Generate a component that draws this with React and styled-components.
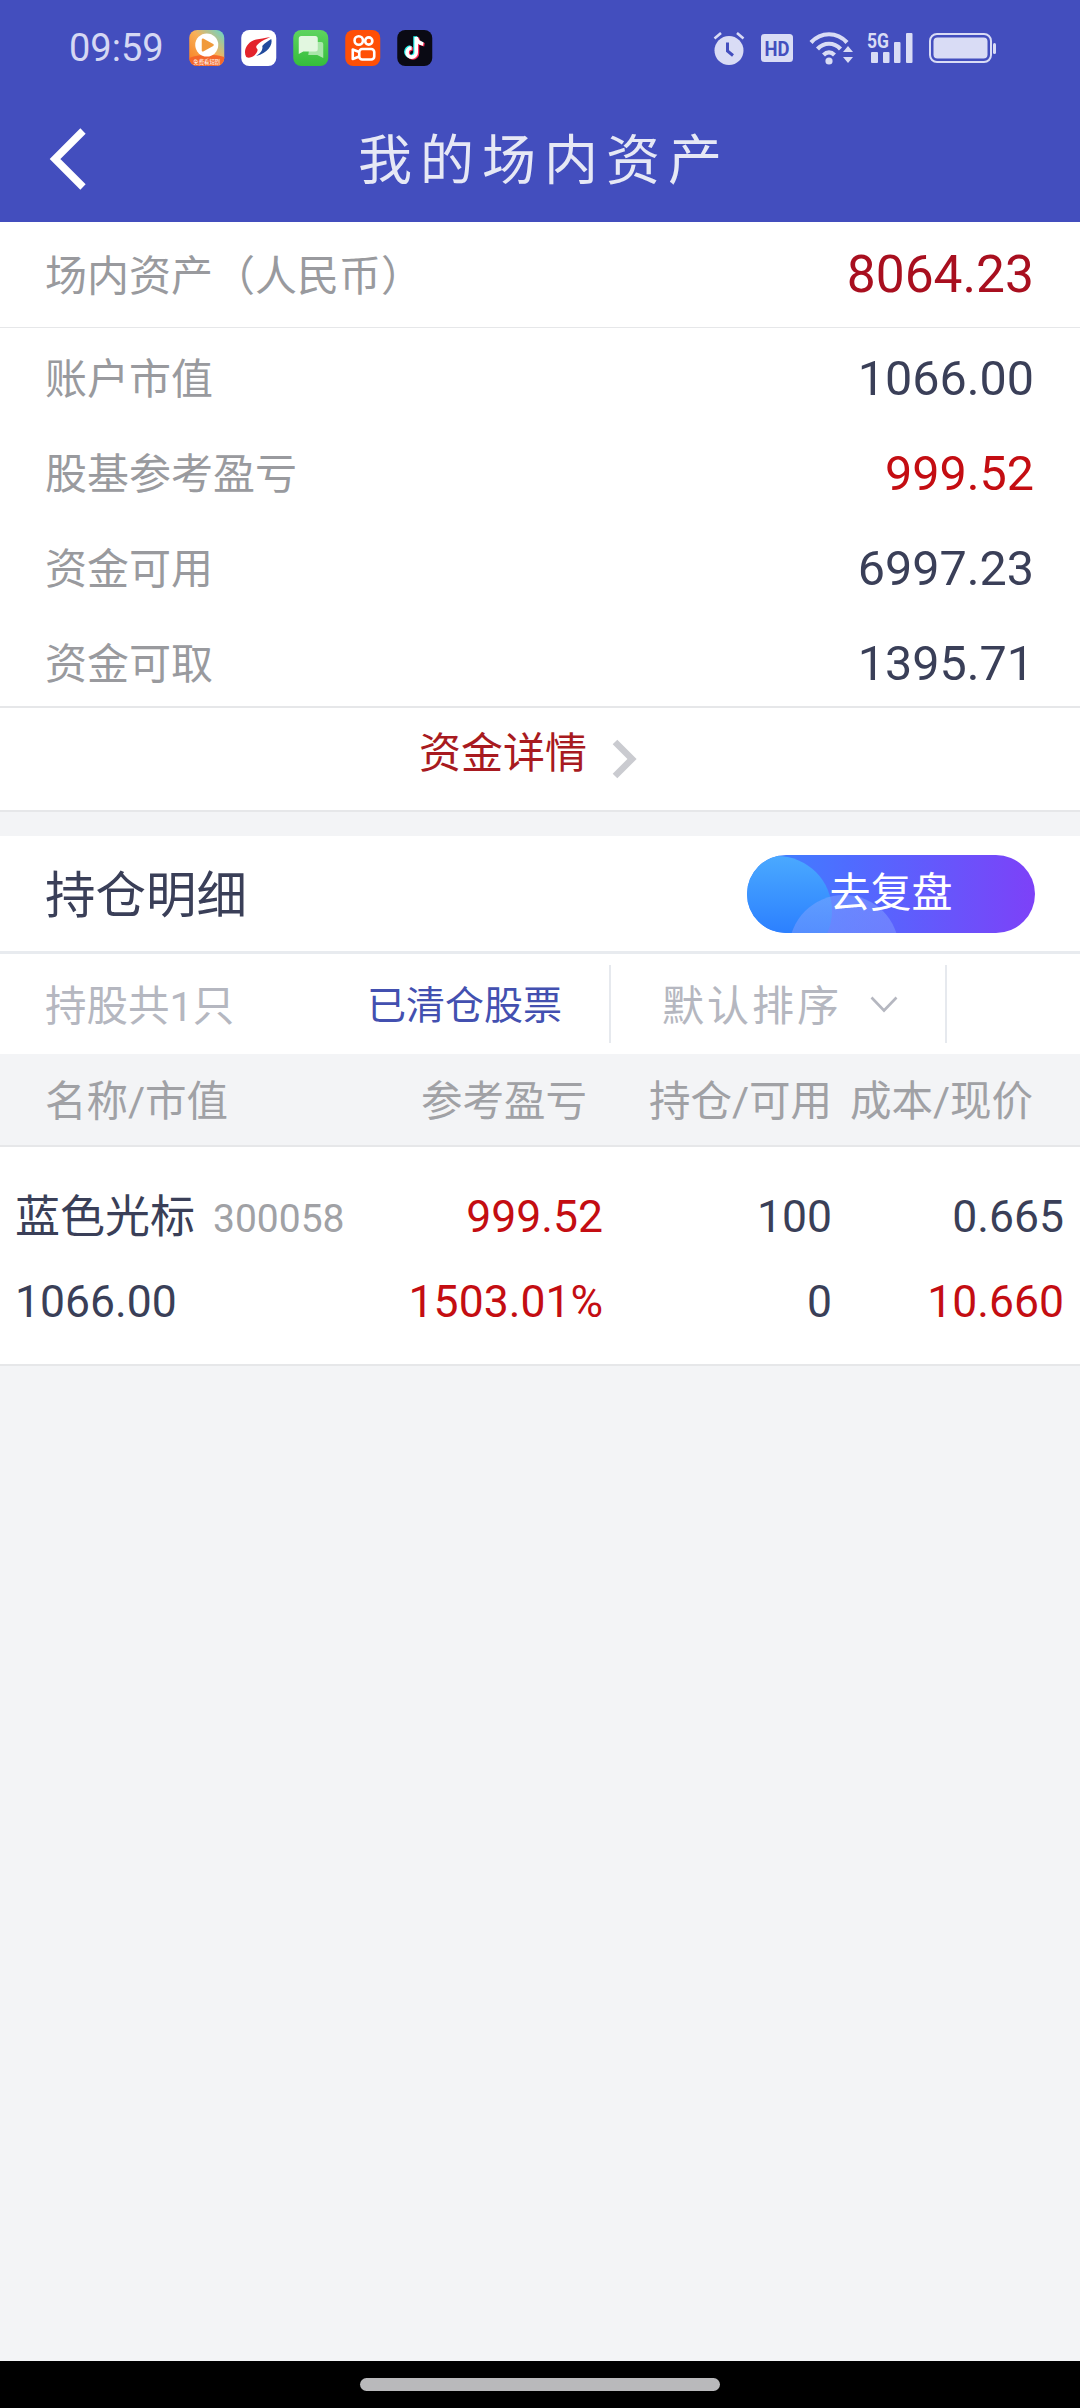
import React from "react";
import styled, { createGlobalStyle } from "styled-components";

const Global = createGlobalStyle`
  html, body { margin: 0; padding: 0; background: #f3f4f6; }
  * { box-sizing: border-box; }
`;

const Page = styled.div`
  width: 1080px;
  height: 2408px;
  display: flex;
  flex-direction: column;
  background: #f3f4f6;
  font-family: Roboto, "Noto Sans CJK SC", sans-serif;
  overflow: hidden;
`;
const Header = styled.header`
  height: 222px;
  background: #434ebe;
  flex: none;
  display: flex;
  flex-direction: column;
`;
const StatusBar = styled.div`
  height: 96px;
  padding: 0 84px 0 69px;
  display: flex;
  align-items: center;
  color: #d5d8f3;
`;
const Time = styled.span`
  flex: none;
  font-size: 38px;
  line-height: 1;
  width: 120px;
`;
const AppIcons = styled.div`
  display: flex;
  gap: 16.5px;
`;
const AppIcon = styled.svg`
  width: 35.5px;
  height: 36px;
  display: block;
`;
const SystemIcons = styled.div`
  margin-left: auto;
  display: flex;
  align-items: center;
`;
const Sys = styled.svg`
  display: block;
  flex: none;
  margin-left: ${(p) => p.$gap || 0}px;
`;
const NavBar = styled.div`
  position: relative;
  flex: 1;
  display: flex;
  align-items: center;
  justify-content: center;
  padding-top: 6px;
`;
const Back = styled.svg`
  position: absolute;
  left: 46px;
  top: 30px;
`;
const Title = styled.h1`
  margin: 0;
  font-size: 54px;
  font-weight: 400;
  line-height: 1;
  letter-spacing: 8px;
  color: #e6e8f5;
  padding-left: 8px;
`;

const Section = styled.section`
  background: #fff;
  flex: none;
`;
const TotalRow = styled.div`
  height: 106px;
  padding: 0 46px 0 45px;
  display: flex;
  align-items: center;
  justify-content: space-between;
  border-bottom: 1px solid #e6e7e9;
`;
const Rows = styled.div`
  padding-top: 4px;
  border-bottom: 2px solid #e6e7e9;
`;
const Row = styled.div`
  height: 95px;
  padding: 0 46px 0 45px;
  display: flex;
  align-items: center;
  justify-content: space-between;
  &:last-child {
    height: 89px;
    padding-top: 6px;
  }
`;
const Label = styled.span`
  font-size: 42px;
  line-height: 1;
  color: #999a9e;
`;
const TotalLabel = styled(Label)`
  padding-top: 4px;
`;
const Value = styled.span`
  font-size: ${(p) => p.$size || 48.5}px;
  line-height: 1;
  color: ${(p) => p.$color || "#3a3f58"};
`;
const DetailRow = styled.div`
  height: 104px;
  display: flex;
  align-items: center;
  justify-content: center;
  gap: 24px;
  border-bottom: 2px solid #e6e7e9;
  padding-right: 24px;
`;
const DetailText = styled.span`
  font-size: 42px;
  line-height: 1;
  color: #a81a20;
  padding-bottom: 10px;
`;
const Spacer = styled.div`
  height: 24px;
  flex: none;
`;
const HoldHead = styled.div`
  height: 118px;
  padding: 0 45px 0 45px;
  display: flex;
  align-items: center;
  justify-content: space-between;
  border-bottom: 3px solid #e8ebef;
`;
const HoldTitle = styled.h2`
  margin: 0;
  padding-top: 5px;
  font-size: 50.5px;
  font-weight: 400;
  line-height: 1;
  color: #3a3f58;
`;
const ReviewButton = styled.div`
  position: relative;
  width: 288px;
  height: 78px;
  border-radius: 39px;
  overflow: hidden;
  display: flex;
  align-items: center;
  justify-content: center;
  background: linear-gradient(90deg, #3a86ff 0%, #4f6cff 35%, #7d41f8 100%);
  color: #fff;
  font-size: 41px;
  line-height: 1;
  &::before {
    content: "";
    position: absolute;
    left: -25px;
    top: 1px;
    width: 110px;
    height: 110px;
    border-radius: 50%;
    background: linear-gradient(180deg, #4aa9ff 0%, #2c80ff 70%);
  }
  &::after {
    content: "";
    position: absolute;
    left: 42px;
    top: 40px;
    width: 110px;
    height: 110px;
    border-radius: 50%;
    background: linear-gradient(180deg, rgba(140, 170, 255, 0.45), rgba(120, 140, 255, 0.5));
  }
`;
const ReviewLabel = styled.span`
  position: relative;
  z-index: 1;
`;
const FilterBar = styled.div`
  height: 100px;
  display: flex;
  align-items: center;
  padding-left: 45px;
`;
const Count = styled.span`
  font-size: 41.5px;
  line-height: 1;
  color: #b5b7c0;
  width: 322px;
  padding-top: 5px;
`;
const Cleared = styled.span`
  font-size: 39px;
  line-height: 1;
  color: #4350b0;
  width: 242px;
  padding-top: 5px;
`;
const SortCell = styled.div`
  width: 338px;
  height: 78px;
  padding-left: 51px;
  display: flex;
  align-items: center;
  gap: 28px;
  border-left: 2px solid #e6e9ee;
  border-right: 2px solid #e6e9ee;
`;
const SortText = styled.span`
  font-size: 42px;
  line-height: 1;
  letter-spacing: 3px;
  color: #b5b7c0;
  padding-top: 5px;
`;
const TableHead = styled.div`
  height: 93px;
  padding: 5px 47px 0 45px;
  display: grid;
  grid-template-columns: minmax(0, 1fr) 200px 245px 201px;
  align-items: center;
  border-bottom: 2px solid #e6e7e9;
  flex: none;
`;
const HeadCell = styled.span`
  font-size: 41.5px;
  line-height: 1;
  color: #a0a1a5;
  text-align: ${(p) => (p.$left ? "left" : "right")};
  white-space: nowrap;
`;
const StockRow = styled.div`
  height: 219px;
  padding: 28px 16px 0 15px;
  background: #fff;
  border-bottom: 2px solid #e6e7e9;
  display: grid;
  grid-template-columns: minmax(0, 1fr) 260px 229px 232px;
  grid-auto-rows: 85px;
  align-items: center;
  flex: none;
`;
const NameCell = styled.div`
  display: flex;
  align-items: center;
  gap: 18px;
  white-space: nowrap;
`;
const StockName = styled.span`
  font-size: 45px;
  line-height: 1;
  color: #3a3f58;
`;
const StockCode = styled.span`
  font-size: 39px;
  line-height: 1;
  color: #a0a1a5;
  padding-top: 3px;
`;
const Cell = styled.span`
  font-size: 44.5px;
  line-height: 1;
  color: ${(p) => (p.$red ? "#c40d12" : "#3a3f58")};
  text-align: ${(p) => (p.$left ? "left" : "right")};
`;
const Fill = styled.div`
  flex: 1;
`;
const GestureBar = styled.div`
  height: 47px;
  background: #000;
  flex: none;
  display: flex;
  align-items: center;
  justify-content: center;
`;
const Pill = styled.div`
  width: 360px;
  height: 13px;
  border-radius: 7px;
  background: #b9b9bb;
`;

const PlayApp = () => (
  <AppIcon viewBox="0 0 35 36">
    <defs>
      <linearGradient id="pa" x1="0" y1="1" x2="1" y2="0">
        <stop offset="0" stopColor="#f97a1c" />
        <stop offset="0.55" stopColor="#f7b25a" />
        <stop offset="1" stopColor="#5fd6cf" />
      </linearGradient>
    </defs>
    <rect width="35" height="36" rx="8" fill="url(#pa)" />
    <path d="M0 28 C10 24 25 24 35 27 V28 A8 8 0 0 1 27 36 H8 A8 8 0 0 1 0 28Z" fill="#f4672a" />
    <circle cx="17.5" cy="15" r="11.5" fill="#fff" />
    <path d="M13.5 9.5 L23.5 15 L13.5 20.5Z" fill="#f09a3c" stroke="#f09a3c" strokeWidth="2" strokeLinejoin="round" />
    <text x="17.5" y="33.5" fontSize="5.4" fill="#fff" textAnchor="middle" fontFamily="'Noto Sans CJK SC', sans-serif">免费看短剧</text>
  </AppIcon>
);
const BankApp = () => (
  <AppIcon viewBox="0 0 35 36">
    <rect width="35" height="36" rx="8" fill="#fff" />
    <path d="M5 27 C1 20 7 11 15 9.5 C19 9 23 8 29 7 C25 9 21 10.5 18 13 C15 15.5 14 17 16 19 C18 21.5 11 30 5 27Z" fill="#e3232c" />
    <path d="M30 9 C32 15 26 23 15 26 C19.5 23 22 19.5 21 16 C23 13 27 11 30 9Z" fill="#214a9c" />
  </AppIcon>
);
const ChatApp = () => (
  <AppIcon viewBox="0 0 35 36">
    <defs>
      <linearGradient id="ch" x1="0" y1="0" x2="0" y2="1">
        <stop offset="0" stopColor="#5ed45f" />
        <stop offset="1" stopColor="#35bd3c" />
      </linearGradient>
    </defs>
    <rect width="35" height="36" rx="8" fill="url(#ch)" />
    <path d="M17 12 H28 A2 2 0 0 1 30 14 V28 L24 25 H15 Z" fill="#a9e6aa" />
    <path d="M8 6 H22 A2.5 2.5 0 0 1 24.5 8.5 V19 A2.5 2.5 0 0 1 22 21.5 H10 L5.5 24 V8.5 A2.5 2.5 0 0 1 8 6Z" fill="#e2f7e0" />
  </AppIcon>
);
const KuaishouApp = () => (
  <AppIcon viewBox="0 0 35 36">
    <rect width="35" height="36" rx="8" fill="#ff4f06" />
    <g fill="none" stroke="#fff" strokeWidth="2.6">
      <circle cx="13.5" cy="10.5" r="4.2" />
      <circle cx="23.5" cy="11" r="3.6" />
      <rect x="14" y="19" width="15" height="10.5" rx="3" />
      <path d="M14 22 L7.5 19.5 V29 L14 26.5" strokeLinejoin="round" />
    </g>
  </AppIcon>
);
const TikTokApp = () => {
  const note = "M19 7 V22.5 A4.6 4.6 0 1 1 14.4 17.9 M19 7 C19.5 11 22.5 13.5 26 14";
  return (
    <AppIcon viewBox="0 0 35 36">
      <rect width="35" height="36" rx="8" fill="#0a0a14" />
      <g fill="none" strokeWidth="3.6">
        <path d={note} stroke="#25f4ee" transform="translate(-1.2 -0.8)" />
        <path d={note} stroke="#fe2c55" transform="translate(1.2 0.8)" />
        <path d={note} stroke="#fff" />
      </g>
    </AppIcon>
  );
};

const Alarm = () => (
  <Sys width="32" height="34" viewBox="0 0 32 34">
    <circle cx="16" cy="19.5" r="14.5" fill="#d9dcf5" />
    <path d="M1.5 7.5 L8 2 M30.5 7.5 L24 2" stroke="#d9dcf5" strokeWidth="2.6" />
    <path d="M14.5 11.5 V20 L20 24.5" fill="none" stroke="#434ebe" strokeWidth="3" />
  </Sys>
);
const HD = () => (
  <Sys $gap={16} width="32" height="28" viewBox="0 0 32 28">
    <rect width="32" height="28" rx="3.5" fill="#d9dcf5" />
    <text x="16" y="21.5" fontSize="20" fontWeight="700" fill="#434ebe" textAnchor="middle" fontFamily="Roboto, sans-serif" textLength="25" lengthAdjust="spacingAndGlyphs">HD</text>
  </Sys>
);
const Wifi = () => (
  <Sys $gap={16} width="45" height="34" viewBox="0 0 45 34">
    <g fill="none" stroke="#d9dcf5" strokeWidth="4.2">
      <path d="M2 11.5 C12 0.5 28 0.5 38 11.5" />
      <path d="M8.5 18 C15 11 25 11 31.5 18" />
      <path d="M14.5 24 C18 20.5 22 20.5 25.5 24" />
    </g>
    <circle cx="20" cy="30" r="3.6" fill="#d9dcf5" />
    <path d="M34 21 L39 15 L44 21Z M34 26 L44 26 L39 32Z" fill="#d9dcf5" />
  </Sys>
);
const Signal = () => (
  <Sys $gap={13} width="46" height="42" viewBox="0 -5 46 42">
    <text x="0" y="16" fontSize="20.5" fontWeight="700" fill="#d9dcf5" fontFamily="Roboto, sans-serif" textLength="22" lengthAdjust="spacingAndGlyphs">5G</text>
    <rect x="4" y="20" width="7" height="11" rx="1" fill="#d9dcf5" />
    <rect x="16" y="20" width="6.5" height="11" rx="1" fill="#d9dcf5" />
    <rect x="27" y="10" width="6.5" height="21" rx="1" fill="#d9dcf5" />
    <rect x="39" y="1" width="6.5" height="30" rx="1" fill="#d9dcf5" />
  </Sys>
);
const Battery = () => (
  <Sys $gap={16} width="67" height="30" viewBox="0 0 67 30">
    <rect x="1" y="1" width="61" height="28" rx="7" fill="none" stroke="#d9dcf5" strokeWidth="2" />
    <rect x="4.5" y="4.5" width="54" height="21" rx="4" fill="#d9dcf5" />
    <rect x="64" y="10" width="3" height="11" rx="1.5" fill="#d9dcf5" />
  </Sys>
);

export default function App() {
  return (
    <Page>
      <Global />
      <Header>
        <StatusBar>
          <Time>09:59</Time>
          <AppIcons>
            <PlayApp />
            <BankApp />
            <ChatApp />
            <KuaishouApp />
            <TikTokApp />
          </AppIcons>
          <SystemIcons>
            <Alarm />
            <HD />
            <Wifi />
            <Signal />
            <Battery />
          </SystemIcons>
        </StatusBar>
        <NavBar>
          <Back width="44" height="66" viewBox="0 0 44 66">
            <path d="M37 5 L9 33 L37 61" fill="none" stroke="#fff" strokeWidth="7.5" />
          </Back>
          <Title>我的场内资产</Title>
        </NavBar>
      </Header>

      <Section>
        <TotalRow>
          <TotalLabel>场内资产（人民币）</TotalLabel>
          <Value $size={51.5} $color="#a80f1f">8064.23</Value>
        </TotalRow>
        <Rows>
          <Row><Label>账户市值</Label><Value>1066.00</Value></Row>
          <Row><Label>股基参考盈亏</Label><Value $color="#c40d12">999.52</Value></Row>
          <Row><Label>资金可用</Label><Value>6997.23</Value></Row>
          <Row><Label>资金可取</Label><Value>1395.71</Value></Row>
        </Rows>
        <DetailRow>
          <DetailText>资金详情</DetailText>
          <svg width="26" height="42" viewBox="0 0 26 42">
            <path d="M4 4 L21 21 L4 38" fill="none" stroke="#cacbd0" strokeWidth="6.5" />
          </svg>
        </DetailRow>
      </Section>

      <Spacer />

      <Section>
        <HoldHead>
          <HoldTitle>持仓明细</HoldTitle>
          <ReviewButton><ReviewLabel>去复盘</ReviewLabel></ReviewButton>
        </HoldHead>
        <FilterBar>
          <Count>持股共1只</Count>
          <Cleared>已清仓股票</Cleared>
          <SortCell>
            <SortText>默认排序</SortText>
            <svg width="28" height="17" viewBox="0 0 28 17">
              <path d="M1.5 1.5 L14 14.5 L26.5 1.5" fill="none" stroke="#b5b7c0" strokeWidth="2.6" />
            </svg>
          </SortCell>
        </FilterBar>
      </Section>

      <TableHead>
        <HeadCell $left>名称/市值</HeadCell>
        <HeadCell>参考盈亏</HeadCell>
        <HeadCell>持仓/可用</HeadCell>
        <HeadCell>成本/现价</HeadCell>
      </TableHead>
      <StockRow>
        <NameCell>
          <StockName>蓝色光标</StockName>
          <StockCode>300058</StockCode>
        </NameCell>
        <Cell $red>999.52</Cell>
        <Cell>100</Cell>
        <Cell>0.665</Cell>
        <Cell $left>1066.00</Cell>
        <Cell $red>1503.01%</Cell>
        <Cell>0</Cell>
        <Cell $red>10.660</Cell>
      </StockRow>

      <Fill />
      <GestureBar><Pill /></GestureBar>
    </Page>
  );
}
